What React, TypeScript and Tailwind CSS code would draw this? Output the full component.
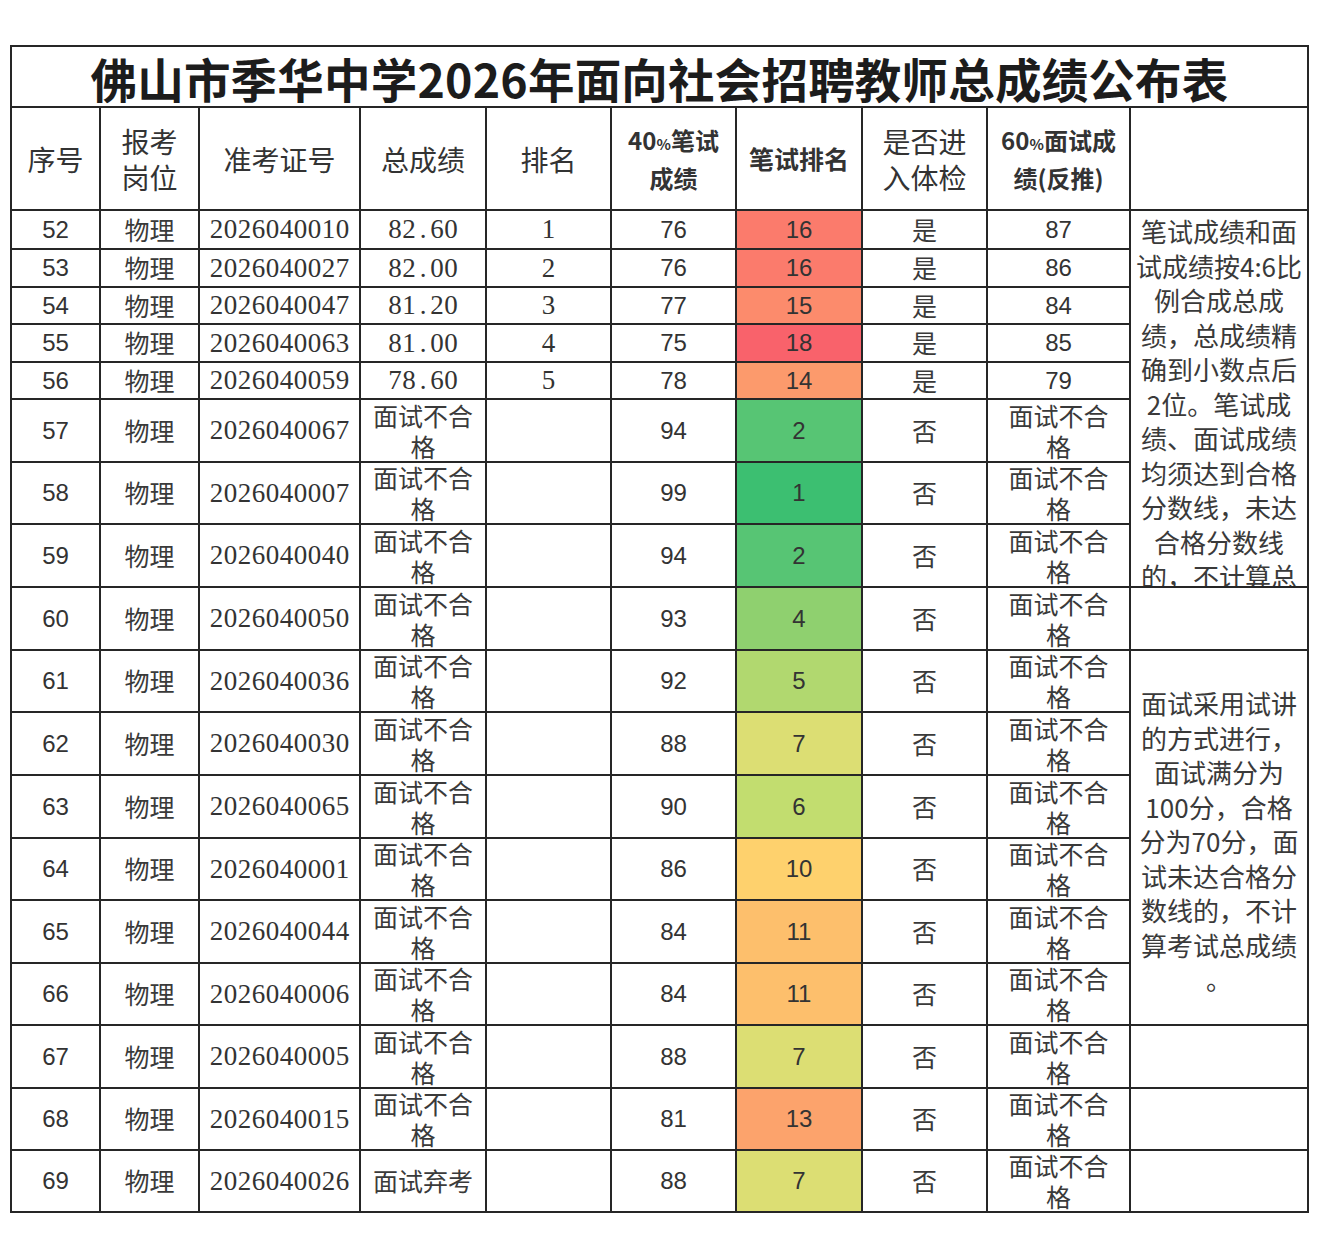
import type { ReactElement, ReactNode } from "react";

type Tone = "red1" | "red2" | "red3" | "red4" | "org1" | "org2" | "org3" | "yel1" | "grn1" | "grn2" | "grn3" | "grn4" | "grn5";

type Row = {
  no: number;
  id: string;
  total: string | null;
  rank: string;
  written: number;
  writtenRank: number;
  tone: Tone;
  passed: boolean;
  interview: string | null;
};

const TONE_CLASS: Record<Tone, string> = {
  red1: "bg-[#fb7b6c] text-[#5c1c16]",
  red2: "bg-[#fc8b6c] text-[#5c1c16]",
  red3: "bg-[#f9626b] text-[#5a1218]",
  red4: "bg-[#fc9a6c] text-[#5c2416]",
  org1: "bg-[#fed16d] text-[#4a3414]",
  org2: "bg-[#fdbf6c] text-[#4a2c14]",
  org3: "bg-[#fca36c] text-[#5a2416]",
  yel1: "bg-[#dcde73] text-[#3a3a18]",
  grn1: "bg-[#57c574] text-[#163f20]",
  grn2: "bg-[#3cbf71] text-[#133c1e]",
  grn3: "bg-[#8fd06f] text-[#1f421c]",
  grn4: "bg-[#b1d86f] text-[#2c421a]",
  grn5: "bg-[#c2dd6f] text-[#2f421a]",
};

const ROWS: Row[] = [
  { no: 52, id: "2026040010", total: "82.60", rank: "1", written: 76, writtenRank: 16, tone: "red1", passed: true, interview: "87" },
  { no: 53, id: "2026040027", total: "82.00", rank: "2", written: 76, writtenRank: 16, tone: "red1", passed: true, interview: "86" },
  { no: 54, id: "2026040047", total: "81.20", rank: "3", written: 77, writtenRank: 15, tone: "red2", passed: true, interview: "84" },
  { no: 55, id: "2026040063", total: "81.00", rank: "4", written: 75, writtenRank: 18, tone: "red3", passed: true, interview: "85" },
  { no: 56, id: "2026040059", total: "78.60", rank: "5", written: 78, writtenRank: 14, tone: "red4", passed: true, interview: "79" },
  { no: 57, id: "2026040067", total: null, rank: "", written: 94, writtenRank: 2, tone: "grn1", passed: false, interview: null },
  { no: 58, id: "2026040007", total: null, rank: "", written: 99, writtenRank: 1, tone: "grn2", passed: false, interview: null },
  { no: 59, id: "2026040040", total: null, rank: "", written: 94, writtenRank: 2, tone: "grn1", passed: false, interview: null },
  { no: 60, id: "2026040050", total: null, rank: "", written: 93, writtenRank: 4, tone: "grn3", passed: false, interview: null },
  { no: 61, id: "2026040036", total: null, rank: "", written: 92, writtenRank: 5, tone: "grn4", passed: false, interview: null },
  { no: 62, id: "2026040030", total: null, rank: "", written: 88, writtenRank: 7, tone: "yel1", passed: false, interview: null },
  { no: 63, id: "2026040065", total: null, rank: "", written: 90, writtenRank: 6, tone: "grn5", passed: false, interview: null },
  { no: 64, id: "2026040001", total: null, rank: "", written: 86, writtenRank: 10, tone: "org1", passed: false, interview: null },
  { no: 65, id: "2026040044", total: null, rank: "", written: 84, writtenRank: 11, tone: "org2", passed: false, interview: null },
  { no: 66, id: "2026040006", total: null, rank: "", written: 84, writtenRank: 11, tone: "org2", passed: false, interview: null },
  { no: 67, id: "2026040005", total: null, rank: "", written: 88, writtenRank: 7, tone: "yel1", passed: false, interview: null },
  { no: 68, id: "2026040015", total: null, rank: "", written: 81, writtenRank: 13, tone: "org3", passed: false, interview: null },
  { no: 69, id: "2026040026", total: "面试弃考", rank: "", written: 88, writtenRank: 7, tone: "yel1", passed: false, interview: null },
];

const NOTE_ONE = [
  "笔试成绩和面",
  "试成绩按4:6比",
  "例合成总成",
  "绩，总成绩精",
  "确到小数点后",
  "2位。笔试成",
  "绩、面试成绩",
  "均须达到合格",
  "分数线，未达",
  "合格分数线",
  "的，不计算总",
];

const NOTE_TWO = [
  "面试采用试讲",
  "的方式进行，",
  "面试满分为",
  "100分，合格",
  "分为70分，面",
  "试未达合格分",
  "数线的，不计",
  "算考试总成绩",
  "。",
];

const CJK = "font-['Noto_Sans_CJK_SC',sans-serif]";
const SANS = "font-['Liberation_Sans','Noto_Sans_CJK_SC',sans-serif]";
const SERIF = "font-['Liberation_Serif','Noto_Sans_CJK_SC',serif]";

function Cell({ children, className = "" }: { children?: ReactNode; className?: string }): ReactElement {
  return (
    <div
      className={`flex items-center justify-center overflow-hidden border-r-2 border-b-2 border-[#262626] text-center text-[#333] ${className}`}
    >
      {children}
    </div>
  );
}

// SimSun-style digits: every character sits in a half-width box
function FixedDigits({ text }: { text: string }): ReactElement {
  return (
    <span className={`${SERIF} text-[27px] leading-none`}>
      {text.split("").map((ch, i) => (
        <span key={i} className="inline-block w-[14px] text-center">
          {ch}
        </span>
      ))}
    </span>
  );
}

function Failed(): ReactElement {
  return (
    <div className={`${CJK} text-[25px] leading-[31px] text-[#3a3a3a]`}>
      <div>面试不合</div>
      <div>格</div>
    </div>
  );
}

function HeaderLines({ lines, className }: { lines: ReactNode[]; className: string }): ReactElement {
  return (
    <div className={className}>
      {lines.map((line, i) => (
        <div key={i}>{line}</div>
      ))}
    </div>
  );
}

export default function App(): ReactElement {
  const headerText = `${CJK} text-[28px] leading-[36px] text-[#333]`;
  const headerBold = `${CJK} text-[24px] font-semibold leading-[34px] text-[#333]`;

  return (
    <div className="h-[1238px] w-[1320px] bg-white pl-[10px] pt-[45px]">
      <div className="grid w-[1299px] grid-cols-[89px_99px_161px_126px_125px_125px_126px_125px_143px_178px] grid-rows-[61px_103px_39px_38px_37px_38px_37px_63px_62px_63px_63px_62px_63px_63px_62px_63px_62px_63px_62px_62px] border-t-2 border-l-2 border-[#262626]">
        <Cell className="col-span-10 !overflow-visible">
          <span className={`${CJK} pt-[2px] text-[46.5px] font-bold leading-[58px] tracking-[0.2px] text-[#1c1c1c]`}>
            佛山市季华中学2026年面向社会招聘教师总成绩公布表
          </span>
        </Cell>

        <Cell>
          <span className={headerText}>序号</span>
        </Cell>
        <Cell>
          <HeaderLines lines={["报考", "岗位"]} className={headerText} />
        </Cell>
        <Cell>
          <span className={headerText}>准考证号</span>
        </Cell>
        <Cell>
          <span className={headerText}>总成绩</span>
        </Cell>
        <Cell>
          <span className={headerText}>排名</span>
        </Cell>
        <Cell>
          <HeaderLines
            lines={[
              <>
                40<span className="text-[15px]">%</span>笔试
              </>,
              "成绩",
            ]}
            className={headerBold}
          />
        </Cell>
        <Cell>
          <span className={`${CJK} text-[25px] font-semibold text-[#333]`}>笔试排名</span>
        </Cell>
        <Cell>
          <HeaderLines lines={["是否进", "入体检"]} className={headerText} />
        </Cell>
        <Cell>
          <HeaderLines
            lines={[
              <>
                60<span className="text-[15px]">%</span>面试成
              </>,
              "绩(反推)",
            ]}
            className={headerBold}
          />
        </Cell>
        <Cell />

        {ROWS.map((row) => (
          <div key={row.no} className="contents">
            <Cell>
              <span className={`${SANS} text-[24px]`}>{row.no}</span>
            </Cell>
            <Cell>
              <span className={`${CJK} text-[25px] text-[#3a3a3a]`}>物理</span>
            </Cell>
            <Cell>
              <FixedDigits text={row.id} />
            </Cell>
            <Cell>
              {row.total === null ? (
                <Failed />
              ) : row.total === "面试弃考" ? (
                <span className={`${CJK} text-[25px] text-[#3a3a3a]`}>面试弃考</span>
              ) : (
                <FixedDigits text={row.total} />
              )}
            </Cell>
            <Cell>{row.rank ? <FixedDigits text={row.rank} /> : null}</Cell>
            <Cell>
              <span className={`${SANS} text-[24px]`}>{row.written}</span>
            </Cell>
            <Cell className={TONE_CLASS[row.tone]}>
              <span className={`${SANS} text-[24px]`}>{row.writtenRank}</span>
            </Cell>
            <Cell>
              <span className={`${CJK} text-[25px] text-[#3a3a3a]`}>{row.passed ? "是" : "否"}</span>
            </Cell>
            <Cell>
              {row.interview ? <span className={`${SANS} text-[24px]`}>{row.interview}</span> : <Failed />}
            </Cell>

            {row.no === 52 ? (
              <Cell className="row-span-8 !items-start">
                <div className={`${CJK} whitespace-nowrap pt-[3px] text-[26px] leading-[34.5px] text-[#3a3a3a]`}>
                  {NOTE_ONE.map((line) => (
                    <div key={line}>{line}</div>
                  ))}
                </div>
              </Cell>
            ) : null}
            {row.no === 61 ? (
              <Cell className="row-span-6">
                <div className={`${CJK} whitespace-nowrap pt-[8px] text-[26px] leading-[34.5px] text-[#3a3a3a]`}>
                  {NOTE_TWO.map((line) => (
                    <div key={line}>{line}</div>
                  ))}
                </div>
              </Cell>
            ) : null}
            {row.no === 60 || row.no >= 67 ? <Cell /> : null}
          </div>
        ))}
      </div>
    </div>
  );
}
